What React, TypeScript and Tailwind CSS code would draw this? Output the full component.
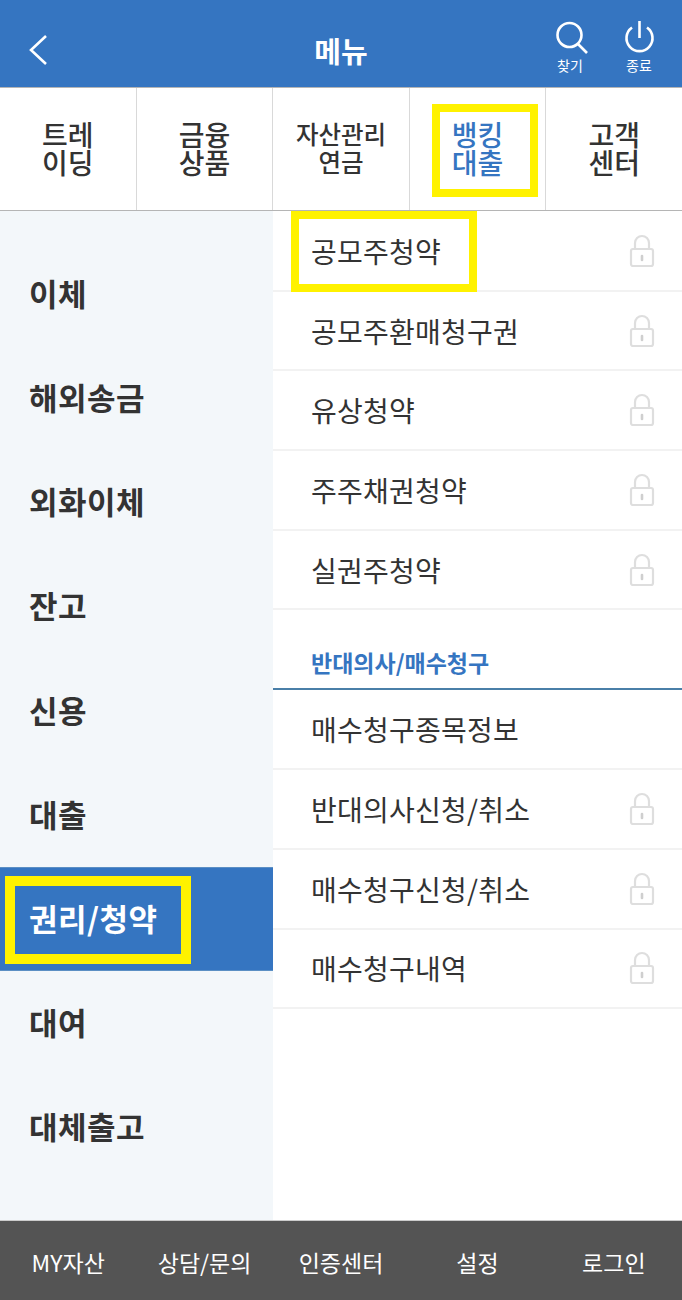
const tabs = [
  { label: ['트레', '이딩'], cls: 'text-[28px]' },
  { label: ['금융', '상품'], cls: 'text-[28px]' },
  { label: ['자산관리', '연금'], cls: 'text-[24.5px]' },
  { label: ['뱅킹', '대출'], cls: 'text-[28px] text-[#3575c1]' },
  { label: ['고객', '센터'], cls: 'text-[28px]' },
];

const sideItems = ['이체', '해외송금', '외화이체', '잔고', '신용', '대출', '권리/청약', '대여', '대체출고'];
const bottomItems = ['MY자산', '상담/문의', '인증센터', '설정', '로그인'];

function LockIcon() {
  return (
    <svg width="26" height="34" viewBox="0 0 26 34" fill="none" stroke="#dedede" strokeWidth="2.2" className="mr-[27px]">
      <path d="M6 15V9a7 7 0 0 1 14 0v6" />
      <rect x="2" y="15" width="22" height="17" rx="2" fill="#fff" />
      <path d="M13 22v4" strokeWidth="2.6" strokeLinecap="round" stroke="#cfcfcf" />
    </svg>
  );
}

function SubRow({ label, locked = true }: { label: string; locked?: boolean }) {
  return (
    <div className="flex h-[79.7px] items-center justify-between border-b-2 border-[#f2f2f2] pl-[38px] text-[28px] tracking-[0.25px] text-[#333]">
      <span>{label}</span>
      {locked && <LockIcon />}
    </div>
  );
}

export default function App() {
  return (
    <div className="relative flex h-[1300px] w-[682px] flex-col overflow-hidden bg-white font-['Noto_Sans_CJK_KR','Noto_Sans',sans-serif]">
      <header className="relative flex h-[87px] shrink-0 items-center justify-center bg-[#3575c1] text-white">
        <svg width="24" height="34" viewBox="0 0 24 34" fill="none" stroke="#fff" strokeWidth="2.6" className="absolute left-[26px] top-[33px]">
          <path d="M20 3 5 17l15 14" />
        </svg>
        <h1 className="mt-[13px] text-[29px] font-bold leading-none">메뉴</h1>
        <div className="absolute left-[552px] top-[19px] flex w-[36px] flex-col items-center">
          <svg width="36" height="36" viewBox="0 0 36 36" fill="none" stroke="#fff" strokeWidth="2.6">
            <circle cx="17.5" cy="16" r="12" />
            <path d="m26 25 9 9" />
          </svg>
          <span className="mt-[1px] text-[14px] leading-[18px]">찾기</span>
        </div>
        <div className="absolute left-[620px] top-[19px] flex w-[38px] flex-col items-center">
          <svg width="38" height="36" viewBox="0 0 38 36" fill="none" stroke="#fff" strokeWidth="2.6">
            <path d="M12 8.5a13 13 0 1 0 15 0" />
            <path d="M19.5 2v17" />
          </svg>
          <span className="mt-[1px] text-[14px] leading-[18px]">종료</span>
        </div>
      </header>

      <nav className="flex h-[124px] shrink-0 border-y border-[#b5b5b5] bg-white">
        {tabs.map((tab, i) => (
          <div
            key={tab.label[0]}
            className={`flex flex-1 items-center justify-center border-[#d9d9d9] pb-[2px] text-center font-medium leading-[28px] text-[#333] ${i < 4 ? 'border-r' : ''} ${i === 1 ? 'border-[#aaaaaa]' : ''} ${tab.cls}`}
          >
            <div>
              {tab.label[0]}
              <br />
              {tab.label[1]}
            </div>
          </div>
        ))}
      </nav>

      <div className="flex min-h-0 flex-1">
        <aside className="w-[273px] shrink-0 overflow-hidden bg-[#f3f7fa] pt-[31px]">
          {sideItems.map((item) => (
            <div
              key={item}
              className={`flex h-[104.2px] items-center pb-[2px] pl-[29px] text-[31px] font-bold tracking-[0.5px] ${item === '권리/청약' ? 'border-y border-[#5b8fc4] bg-[#3575c1] text-white' : 'text-[#333]'}`}
            >
              {item}
            </div>
          ))}
        </aside>
        <main className="flex-1 bg-white pt-[1px]">
          <SubRow label="공모주청약" />
          <SubRow label="공모주환매청구권" />
          <SubRow label="유상청약" />
          <SubRow label="주주채권청약" />
          <SubRow label="실권주청약" />
          <div className="flex h-[80px] items-end border-b-2 border-[#4a7fa8] pb-[9px] pl-[38px] text-[23px] font-bold text-[#3575c1]">
            반대의사/매수청구
          </div>
          <SubRow label="매수청구종목정보" locked={false} />
          <SubRow label="반대의사신청/취소" />
          <SubRow label="매수청구신청/취소" />
          <SubRow label="매수청구내역" />
        </main>
      </div>

      <footer className="flex h-[80px] shrink-0 items-center border-t border-[#cccccc] bg-[#545454] pt-[3px] text-[23px] text-white">
        {bottomItems.map((item) => (
          <div key={item} className="flex-1 text-center">
            {item}
          </div>
        ))}
      </footer>

      <div className="pointer-events-none absolute left-[432px] top-[104px] h-[93px] w-[106px] border-[8px] border-[#fff200]" />
      <div className="pointer-events-none absolute left-[291px] top-[211px] h-[81px] w-[186px] border-[8px] border-[#fff200]" />
      <div className="pointer-events-none absolute left-[5px] top-[876px] h-[88px] w-[186px] border-[10px] border-[#fff200]" />
    </div>
  );
}
